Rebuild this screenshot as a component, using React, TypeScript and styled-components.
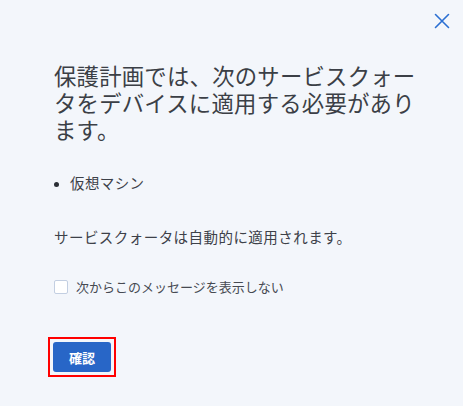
import React, { useState } from "react";
import styled, { createGlobalStyle } from "styled-components";

const GlobalStyle = createGlobalStyle`
  html, body {
    margin: 0;
    padding: 0;
    background: #f3f6fb;
  }
  body {
    font-family: "Noto Sans CJK JP", "Noto Sans", sans-serif;
    color: #3d4149;
  }
`;

const Dialog = styled.div`
  width: 463px;
  height: 406px;
  box-sizing: border-box;
  background: #f3f6fb;
  display: flex;
  flex-direction: column;
  padding: 10px 10px 0 54px;
`;

const Header = styled.div`
  display: flex;
  justify-content: flex-end;
`;

const CloseButton = styled.button`
  width: 22px;
  height: 22px;
  padding: 0;
  border: none;
  background: transparent;
  display: flex;
  align-items: center;
  justify-content: center;
  cursor: pointer;
  color: #2b6fd2;
`;

const Title = styled.h1`
  margin: 30px 0 0 0;
  width: 380px;
  font-size: 22.4px;
  font-weight: 400;
  line-height: 27px;
  letter-spacing: 0.2px;
  color: #3b3f46;
`;

const List = styled.ul`
  margin: 30px 0 0 0;
  padding: 0 0 0 16px;
  font-size: 14.5px;
  line-height: 20px;
  letter-spacing: 0.4px;
  color: #3d4149;
  li::marker {
    font-size: 12px;
    color: #2a2e35;
  }
`;

const Text = styled.p`
  margin: 34px 0 0 0;
  font-size: 14.5px;
  line-height: 20px;
  letter-spacing: 0.45px;
  color: #3d4149;
`;

const CheckRow = styled.label`
  margin-top: 31px;
  display: flex;
  align-items: center;
  gap: 8px;
  font-size: 13px;
  line-height: 18px;
  color: #464a52;
  cursor: pointer;
`;

const Box = styled.span<{ $checked: boolean }>`
  width: 14px;
  height: 14px;
  box-sizing: border-box;
  border: 1px solid #c3cfe2;
  border-radius: 2px;
  background: ${(p) => (p.$checked ? "#2866c7" : "#ffffff")};
`;

const Footer = styled.div`
  margin-top: 41px;
  display: flex;
`;

const Highlight = styled.div`
  margin-left: -6px;
  border: 2px solid #ff0000;
  padding: 3px;
  display: flex;
`;

const PrimaryButton = styled.button`
  width: 58px;
  height: 30px;
  border: none;
  border-radius: 3px;
  background: #2866c7;
  color: #ffffff;
  font-family: "Noto Sans CJK JP", sans-serif;
  font-size: 13px;
  font-weight: 700;
  cursor: pointer;
`;

export default function App() {
  const [checked, setChecked] = useState(false);

  return (
    <>
      <GlobalStyle />
      <Dialog>
        <Header>
          <CloseButton aria-label="閉じる">
            <svg width="16" height="16" viewBox="0 0 16 16" fill="none">
              <path d="M1.5 1.5 L14.5 14.5 M14.5 1.5 L1.5 14.5" stroke="currentColor" strokeWidth="1.6" strokeLinecap="round" />
            </svg>
          </CloseButton>
        </Header>
        <Title>保護計画では、次のサービスクォータをデバイスに適用する必要があります。</Title>
        <List>
          <li>仮想マシン</li>
        </List>
        <Text>サービスクォータは自動的に適用されます。</Text>
        <CheckRow onClick={() => setChecked(!checked)}>
          <Box $checked={checked} />
          次からこのメッセージを表示しない
        </CheckRow>
        <Footer>
          <Highlight>
            <PrimaryButton>確認</PrimaryButton>
          </Highlight>
        </Footer>
      </Dialog>
    </>
  );
}
